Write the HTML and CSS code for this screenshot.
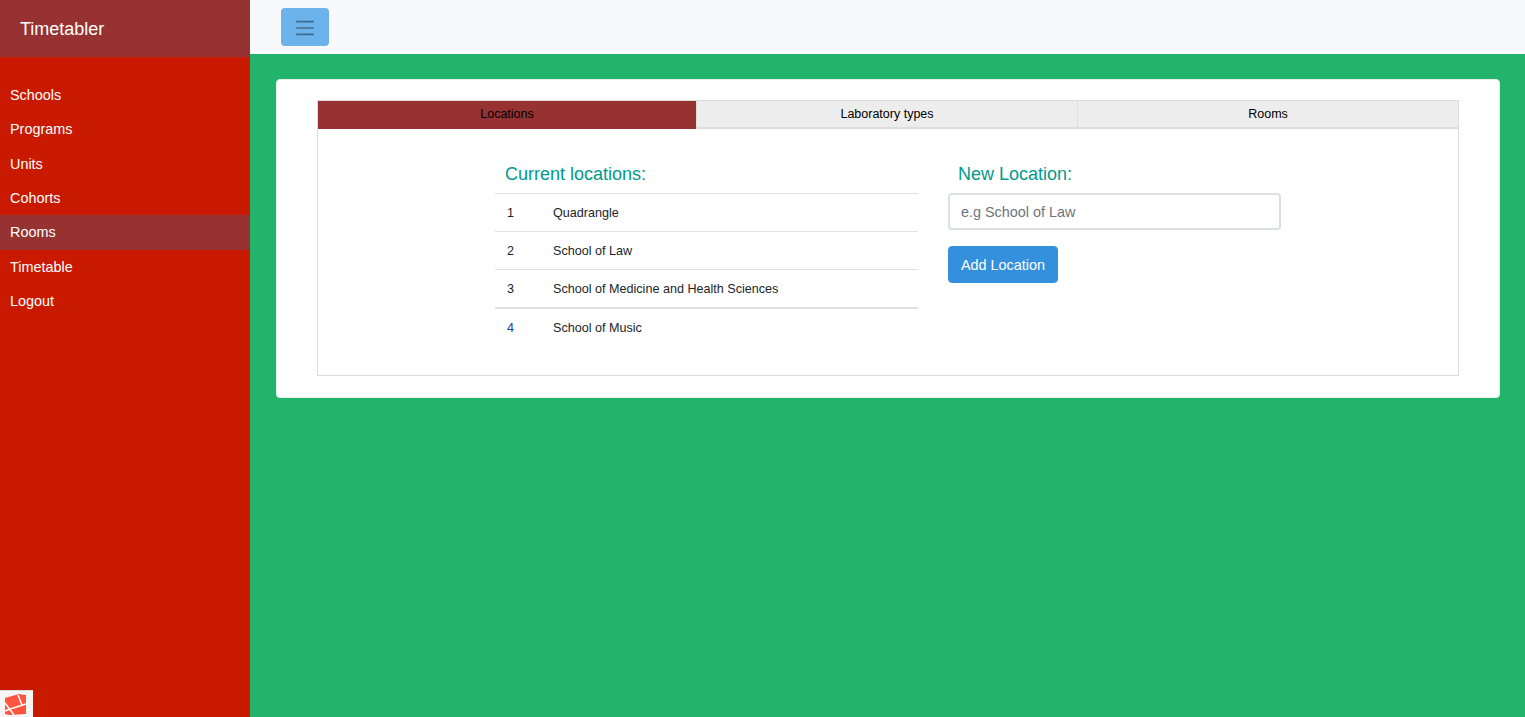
FILE: index.html
```html
<!DOCTYPE html>
<html lang="en">
<head>
<meta charset="utf-8">
<title>Timetabler</title>
<link rel="stylesheet" href="styles.css">
</head>
<body>
<div class="app">
  <aside class="sidebar">
    <div class="brand">Timetabler</div>
    <nav class="nav">
      <a class="nav-item">Schools</a>
      <a class="nav-item">Programs</a>
      <a class="nav-item">Units</a>
      <a class="nav-item">Cohorts</a>
      <a class="nav-item active">Rooms</a>
      <a class="nav-item">Timetable</a>
      <a class="nav-item">Logout</a>
    </nav>
    <div class="debug-tab">
      <svg class="debug-logo" viewBox="0 0 21 21" width="21" height="21" aria-hidden="true">
        <path class="logo-fill" d="M0 4 L14 0 L21 1 V20 L4 21 L0 20 Z"/>
        <path class="logo-line" d="M0 9 L9 21 M5 15 L21 10 M13 1 L17 11 M0 17 L5 15"/>
      </svg>
    </div>
  </aside>
  <div class="main">
    <header class="topbar">
      <button class="toggle" type="button" aria-label="Toggle">
        <svg class="toggle-icon" width="24" height="24" viewBox="0 0 30 30" aria-hidden="true">
          <path class="toggle-bars" d="M4 7H26M4 15H26M4 23H26"/>
        </svg>
      </button>
    </header>
    <div class="content">
      <section class="card">
        <div class="tabs">
          <div class="tab-bar">
            <div class="tab selected">Locations</div>
            <div class="tab">Laboratory types</div>
            <div class="tab">Rooms</div>
          </div>
          <div class="panel">
            <div class="list-col">
              <h2 class="col-title">Current locations:</h2>
              <table class="table">
                <tr><td class="num">1</td><td>Quadrangle</td></tr>
                <tr><td class="num">2</td><td>School of Law</td></tr>
                <tr><td class="num">3</td><td>School of Medicine and Health Sciences</td></tr>
                <tr class="last"><td class="num blue">4</td><td>School of Music</td></tr>
              </table>
            </div>
            <form class="form-col">
              <h2 class="col-title">New Location:</h2>
              <input class="input" type="text" placeholder="e.g School of Law">
              <button class="add" type="button">Add Location</button>
            </form>
          </div>
        </div>
      </section>
    </div>
  </div>
</div>
</body>
</html>
```
FILE: styles.css
```css
* { box-sizing: border-box; }
html, body { margin: 0; height: 100%; }
body { font-family: "Liberation Sans", Arial, sans-serif; overflow: hidden; }
.app { display: flex; height: 717px; }
.sidebar { width: 250px; flex: none; background: #c91a00; position: relative; display: flex; flex-direction: column; }
.brand { height: 57px; background: #963232; color: #fff; font-size: 18px; line-height: 59px; padding-left: 20px; }
.nav { display: flex; flex-direction: column; padding-top: 21px; }
.nav-item { height: 34.34px; line-height: 34.34px; padding-left: 10px; color: #fff; font-size: 14.4px; }
.nav-item.active { background: #963232; }
.debug-tab { position: absolute; left: 0; bottom: 0; width: 33px; height: 27px; background: #f5f5f5; border-top: 1px solid #ddd; padding: 3px 0 0 5px; }
.debug-logo { display: block; }
.logo-fill { fill: #ff5540; }
.logo-line { stroke: #fff; stroke-width: 1.5; fill: none; }
.main { flex: 1; display: flex; flex-direction: column; background: #21b46a; min-width: 0; }
.topbar { height: 54px; background: #f8f9fa; padding: 8px 0 0 31px; }
.toggle { width: 48px; height: 38px; border: 0; border-radius: 4px; background: #6cb2eb; padding: 2px 0 0; display: flex; align-items: center; justify-content: center; }
.toggle-bars { stroke: rgba(0, 0, 0, 0.4); stroke-width: 2; fill: none; }
.content { padding: 25px 25px 0 26px; }
.card { background: #fff; border: 1px solid #e9ecef; border-radius: 4px; padding: 20px 40px; height: 319px; }
.tabs { display: flex; flex-direction: column; height: 276px; }
.tab-bar { display: flex; height: 29px; border: 1px solid #ddd; border-bottom-width: 2px; background: #ededed; }
.tab { flex: 1; text-align: center; font-size: 12.5px; line-height: 27px; color: #000; border-left: 1px solid #ddd; }
.tab:first-child { border-left: 0; flex: 0 0 378px; }
.tab.selected { background: #963232; margin-bottom: -2px; }
.panel { flex: 1; display: flex; gap: 30px; border: 1px solid #ddd; border-top: 0; padding: 28px 0 0 177px; }
.col-title { margin: 0; font-size: 18px; font-weight: 400; line-height: 34px; height: 36px; padding-left: 10px; color: #009a8c; }
.list-col { width: 423px; }
.form-col { width: 333px; display: flex; flex-direction: column; align-items: flex-start; }
.table { width: 100%; border-collapse: collapse; font-size: 12.6px; color: #212529; }
.table td { border-top: 1px solid #dee2e6; height: 38px; padding: 0.5px 12px 0; }
.table .num { width: 46px; }
.table .last td { border-top-width: 2px; height: 39px; }
.blue { color: #1a3d8f; }
.input { width: 333px; height: 37px; border: 2px solid #dcdfe4; border-radius: 4px; padding: 0 11px; font: 14.4px "Liberation Sans", Arial, sans-serif; color: #495057; }
.input::placeholder { color: #6c757d; opacity: 1; }
.add { margin-top: 16px; width: 110px; height: 37px; border: 1px solid #3490dc; border-radius: 4px; background: #3490dc; color: #fff; font: 14.4px "Liberation Sans", Arial, sans-serif; padding: 0; }
```
